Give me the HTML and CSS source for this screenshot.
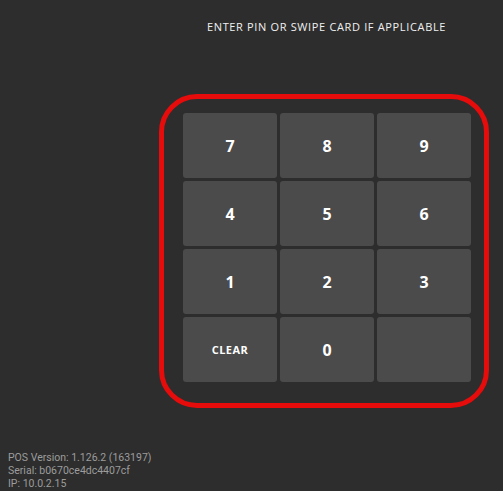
FILE: index.html
```html
<!DOCTYPE html>
<html>
<head>
<meta charset="utf-8">
<link rel="stylesheet" href="styles.css">
</head>
<body>
<div class="page">
  <div class="panel">
    <div class="title">ENTER PIN OR SWIPE CARD IF APPLICABLE</div>
    <div class="pad">
      <div class="grid">
        <div class="key">7</div>
        <div class="key">8</div>
        <div class="key">9</div>
        <div class="key">4</div>
        <div class="key">5</div>
        <div class="key">6</div>
        <div class="key">1</div>
        <div class="key">2</div>
        <div class="key">3</div>
        <div class="key small">CLEAR</div>
        <div class="key">0</div>
        <div class="key"></div>
      </div>
    </div>
  </div>
  <div class="footer">
    <div>POS Version: 1.126.2 (163197)</div>
    <div>Serial: b0670ce4dc4407cf</div>
    <div>IP: 10.0.2.15</div>
  </div>
</div>
</body>
</html>
```

FILE: styles.css
```css
html, body {
  margin: 0;
  padding: 0;
  background: #2d2d2d;
}
.page {
  height: 491px;
  display: flex;
  flex-direction: column;
}
.panel {
  margin-left: 150px;
  width: 353px;
}
.title {
  margin-top: 19px;
  height: 16px;
  line-height: 16px;
  text-align: center;
  color: #f0f0f0;
  font-family: "Open Sans", sans-serif;
  font-size: 11px;
  letter-spacing: 0.65px;
}
.pad {
  margin-top: 59px;
  margin-left: 9px;
  width: 330px;
  height: 314px;
  box-sizing: border-box;
  border: 5px solid #e60c0c;
  border-radius: 38px;
  padding: 14px 12px 21px 19px;
}
.grid {
  display: grid;
  grid-template-columns: repeat(3, 94px);
  grid-auto-rows: 65px;
  gap: 3px;
}
.key {
  background: #4b4b4b;
  border-radius: 3px;
  display: flex;
  align-items: center;
  justify-content: center;
  color: #ffffff;
  font-family: "Open Sans", sans-serif;
  font-weight: 700;
  font-size: 16px;
}
.key.small {
  font-size: 11px;
  letter-spacing: 0.5px;
}
.footer {
  margin-top: auto;
  padding: 0 0 1px 8px;
  color: #9c9c9c;
  font-family: Roboto, sans-serif;
  font-size: 10.5px;
  line-height: 13px;
}
```
